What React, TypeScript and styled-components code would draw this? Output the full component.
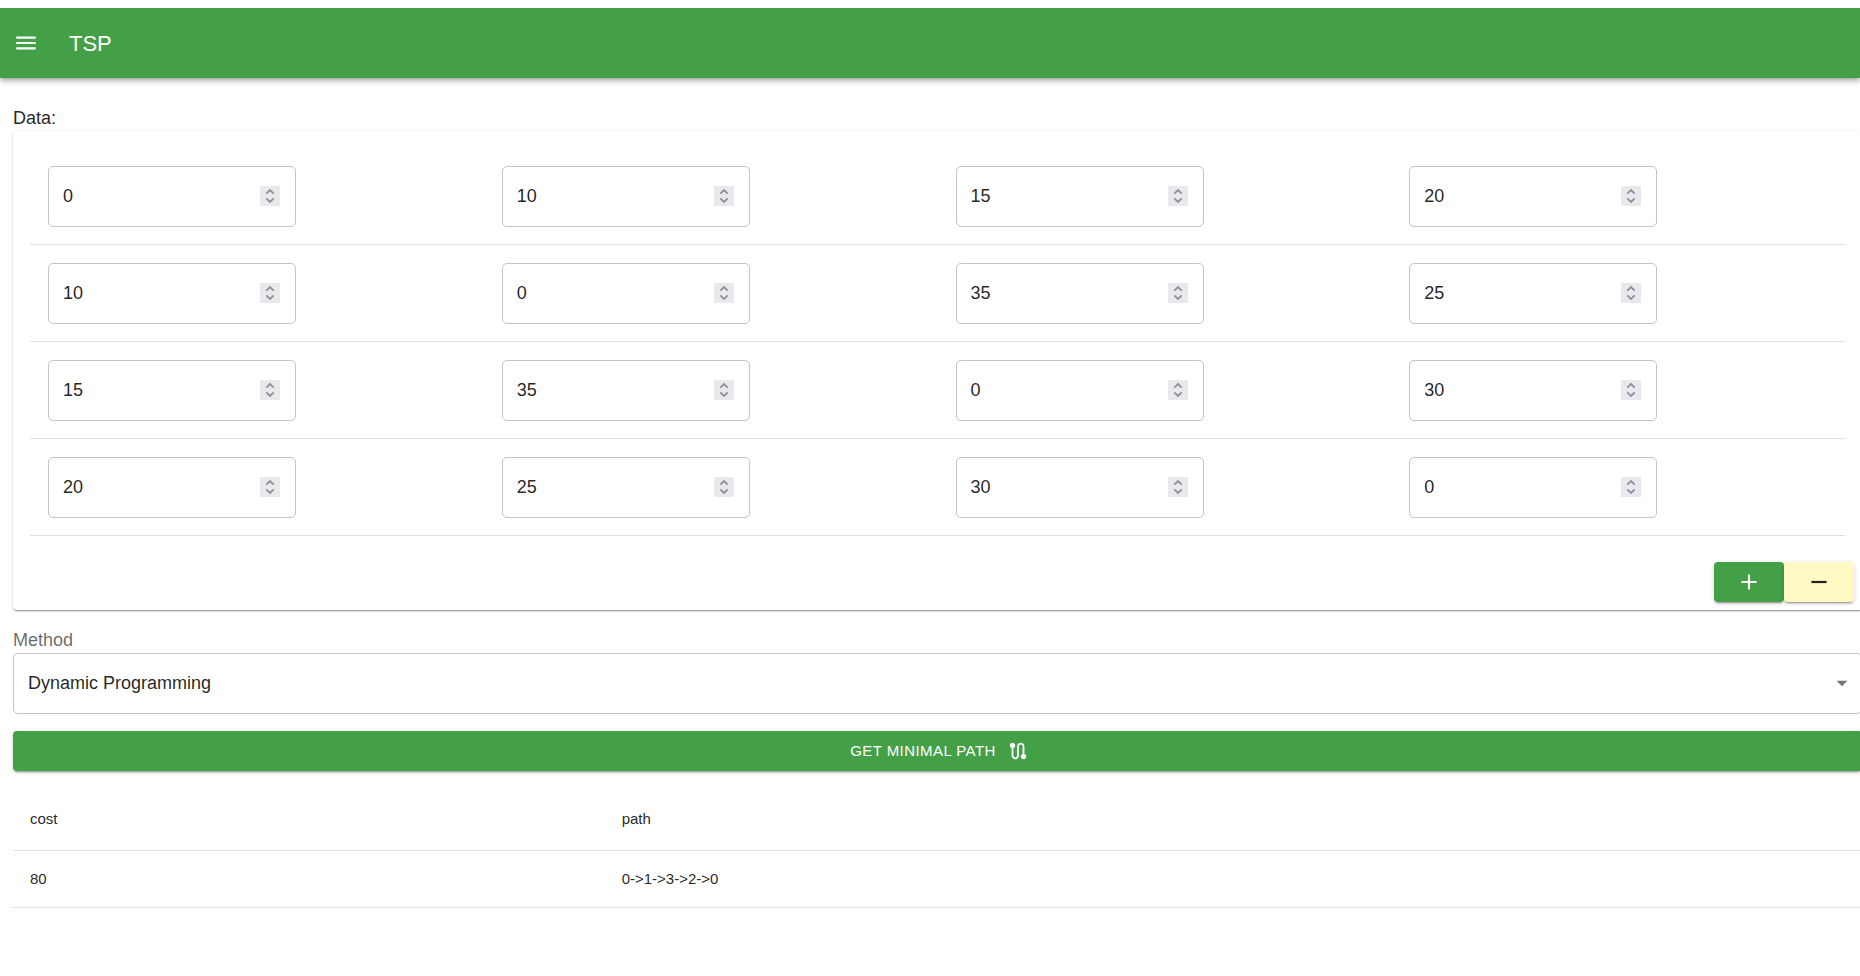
import React, { useState } from "react";
import styled, { createGlobalStyle } from "styled-components";

const GREEN = "#43a047";
const LINE = "rgba(224, 224, 224, 1)";
const OUTLINE = "rgba(0, 0, 0, 0.23)";
const RAISED =
  "0 3px 1px -2px rgba(0,0,0,0.2), 0 2px 2px 0 rgba(0,0,0,0.14), 0 1px 5px 0 rgba(0,0,0,0.12)";

const GlobalStyle = createGlobalStyle`
  * { box-sizing: border-box; }
  body {
    margin: 8px 0 0;
    background: #fff;
    color: rgba(0, 0, 0, 0.87);
    font-family: "Liberation Sans", Arial, sans-serif;
    font-size: 18px;
    line-height: 26px;
    overflow-x: hidden;
  }
  button, input, select { font: inherit; color: inherit; }
`;

const AppBar = styled.header`
  display: flex;
  align-items: center;
  height: 70px;
  background: ${GREEN};
  color: #fff;
  box-shadow: 0 2px 4px -1px rgba(0,0,0,0.2), 0 4px 5px 0 rgba(0,0,0,0.14), 0 1px 10px 0 rgba(0,0,0,0.12);
`;

const MenuButton = styled.button`
  display: flex;
  margin: 0 18px 0 1px;
  padding: 12px;
  border: 0;
  border-radius: 50%;
  background: transparent;
  cursor: pointer;
`;

const Title = styled.h1`
  margin: 0;
  font-size: 22px;
  font-weight: 400;
  line-height: 35px;
`;

const Icon = styled.svg<{ $size?: number }>`
  display: block;
  flex: none;
  width: ${(p) => p.$size ?? 26}px;
  height: ${(p) => p.$size ?? 26}px;
  fill: currentColor;
`;

/* The form bleeds slightly past the right edge of the window. */
const Main = styled.main`
  margin: 0 -2px 0 13px;
  padding-top: 27px;
`;

const Caption = styled.div`
  line-height: 26px;
`;

const Card = styled.section`
  border-radius: 4px;
  background: #fff;
  box-shadow: 0 2px 1px -1px rgba(0,0,0,0.2), 0 1px 1px 0 rgba(0,0,0,0.14), 0 1px 3px 0 rgba(0,0,0,0.2);
`;

const MatrixWrap = styled.div`
  padding: 17px;
`;

const Table = styled.table`
  width: 100%;
  table-layout: fixed;
  border-collapse: separate;
  border-spacing: 0;
`;

const MatrixCell = styled.td`
  padding: 18px 18px 17px;
  border-bottom: 1px solid ${LINE};
`;

const Field = styled.div`
  display: flex;
  align-items: center;
  width: 248px;
  max-width: 100%;
  height: 61px;
  padding: 0 15px 2px 14px;
  border: 1px solid ${OUTLINE};
  border-radius: 5px;
`;

const NumberInput = styled.input`
  flex: 1;
  min-width: 0;
  padding: 0;
  border: 0;
  outline: 0;
  background: transparent;
  appearance: textfield;
  &::-webkit-inner-spin-button { appearance: none; margin: 0; }
`;

const Stepper = styled.div`
  display: flex;
  flex-direction: column;
  width: 20px;
  height: 20px;
  background: #e9e9ed;
`;

const StepButton = styled.button`
  display: block;
  height: 10px;
  padding: 0;
  border: 0;
  background: transparent;
  cursor: pointer;
`;

const StepIcon = styled.svg`
  display: block;
  width: 20px;
  height: 10px;
  fill: none;
  stroke: #8f8f9d;
  stroke-width: 1.8;
`;

const Actions = styled.div`
  display: flex;
  justify-content: flex-end;
  padding: 9px 8px 8px;
`;

const ActionButton = styled.button<{ $pale?: boolean }>`
  display: flex;
  align-items: center;
  justify-content: center;
  width: 70px;
  height: 40px;
  padding: 0;
  border: 0;
  border-radius: 4px;
  background: ${(p) => (p.$pale ? "#fff9c4" : GREEN)};
  color: ${(p) => (p.$pale ? "rgba(0, 0, 0, 0.87)" : "#fff")};
  box-shadow: ${RAISED};
  cursor: pointer;
`;

const MethodLabel = styled.label`
  display: block;
  margin-top: 17px;
  color: rgba(0, 0, 0, 0.6);
`;

const SelectBox = styled.div`
  position: relative;
`;

const Select = styled.select`
  display: block;
  width: 100%;
  height: 61px;
  padding: 0 40px 2px 14px;
  border: 1px solid ${OUTLINE};
  border-radius: 5px;
  background: transparent;
  appearance: none;
`;

const SelectArrow = styled.span`
  position: absolute;
  top: 17px;
  right: 7px;
  color: rgba(0, 0, 0, 0.54);
  pointer-events: none;
`;

const SubmitButton = styled.button`
  display: flex;
  align-items: center;
  justify-content: center;
  gap: 11px;
  width: 100%;
  height: 40px;
  margin: 17px 0;
  padding: 0 14px 0 18px;
  border: 0;
  border-radius: 4px;
  background: ${GREEN};
  color: #fff;
  font-size: 15px;
  letter-spacing: 0.02857em;
  text-transform: uppercase;
  box-shadow: ${RAISED};
  cursor: pointer;
`;

const HeadCell = styled.th`
  height: 63px;
  padding: 0 17px;
  border-bottom: 1px solid ${LINE};
  font-size: 15px;
  font-weight: 400;
  text-align: left;
  &:first-child { width: 32%; }
`;

const ResultCell = styled.td`
  height: 57px;
  padding: 0 17px;
  border-bottom: 1px solid ${LINE};
  font-size: 15px;
`;

const initial = [
  [0, 10, 15, 20],
  [10, 0, 35, 25],
  [15, 35, 0, 30],
  [20, 25, 30, 0],
];

export default function App() {
  const [matrix, setMatrix] = useState(initial);

  const setCell = (r: number, c: number, value: number) =>
    setMatrix((m) => m.map((row, i) => row.map((v, j) => (i === r && j === c ? value : v))));

  const grow = () =>
    setMatrix((m) => [...m.map((row) => [...row, 0]), Array(m.length + 1).fill(0)]);

  const shrink = () =>
    setMatrix((m) => (m.length > 1 ? m.slice(0, -1).map((row) => row.slice(0, -1)) : m));

  return (
    <>
      <GlobalStyle />
      <AppBar>
        <MenuButton aria-label="Menu">
          <Icon viewBox="0 0 24 24">
            <path d="M3 18h18v-2H3v2zm0-5h18v-2H3v2zm0-7v2h18V6H3z" />
          </Icon>
        </MenuButton>
        <Title>TSP</Title>
      </AppBar>
      <Main>
        <Caption id="data-caption">Data:</Caption>
        <Card>
          <MatrixWrap>
            <Table aria-labelledby="data-caption">
              <tbody>
                {matrix.map((row, r) => (
                  <tr key={r}>
                    {row.map((value, c) => (
                      <MatrixCell key={c}>
                        <Field>
                          <NumberInput
                            type="number"
                            aria-label={`Distance from ${r} to ${c}`}
                            value={value}
                            onChange={(e) => setCell(r, c, Number(e.target.value))}
                          />
                          <Stepper>
                            <StepButton aria-label="Increase" onClick={() => setCell(r, c, value + 1)}>
                              <StepIcon viewBox="0 0 20 10">
                                <path d="M6.3 7.7L10 4l3.7 3.7" />
                              </StepIcon>
                            </StepButton>
                            <StepButton aria-label="Decrease" onClick={() => setCell(r, c, value - 1)}>
                              <StepIcon viewBox="0 0 20 10">
                                <path d="M6.3 2.3L10 6l3.7-3.7" />
                              </StepIcon>
                            </StepButton>
                          </Stepper>
                        </Field>
                      </MatrixCell>
                    ))}
                  </tr>
                ))}
              </tbody>
            </Table>
          </MatrixWrap>
          <Actions>
            <ActionButton aria-label="Add node" onClick={grow}>
              <Icon viewBox="0 0 24 24">
                <path d="M19 13h-6v6h-2v-6H5v-2h6V5h2v6h6v2z" />
              </Icon>
            </ActionButton>
            <ActionButton $pale aria-label="Remove node" onClick={shrink}>
              <Icon viewBox="0 0 24 24">
                <path d="M19 13H5v-2h14v2z" />
              </Icon>
            </ActionButton>
          </Actions>
        </Card>
        <MethodLabel htmlFor="method">Method</MethodLabel>
        <SelectBox>
          <Select id="method" defaultValue="dp">
            <option value="dp">Dynamic Programming</option>
          </Select>
          <SelectArrow>
            <Icon viewBox="0 0 24 24">
              <path d="M7 10l5 5 5-5z" />
            </Icon>
          </SelectArrow>
        </SelectBox>
        <SubmitButton>
          <span>Get minimal path</span>
          <Icon $size={22} viewBox="0 0 24 24">
            <path d="M19 15.18V7c0-2.21-1.79-4-4-4s-4 1.79-4 4v10c0 1.1-.9 2-2 2s-2-.9-2-2V8.82C8.16 8.4 9 7.3 9 6c0-1.66-1.34-3-3-3S3 4.34 3 6c0 1.3.84 2.4 2 2.82V17c0 2.21 1.79 4 4 4s4-1.79 4-4V7c0-1.1.9-2 2-2s2 .9 2 2v8.18c-1.16.41-2 1.51-2 2.82 0 1.66 1.34 3 3 3s3-1.34 3-3c0-1.3-.84-2.4-2-2.82z" />
          </Icon>
        </SubmitButton>
        <Table>
          <thead>
            <tr>
              <HeadCell scope="col">cost</HeadCell>
              <HeadCell scope="col">path</HeadCell>
            </tr>
          </thead>
          <tbody>
            <tr>
              <ResultCell>80</ResultCell>
              <ResultCell>0-&gt;1-&gt;3-&gt;2-&gt;0</ResultCell>
            </tr>
          </tbody>
        </Table>
      </Main>
    </>
  );
}
